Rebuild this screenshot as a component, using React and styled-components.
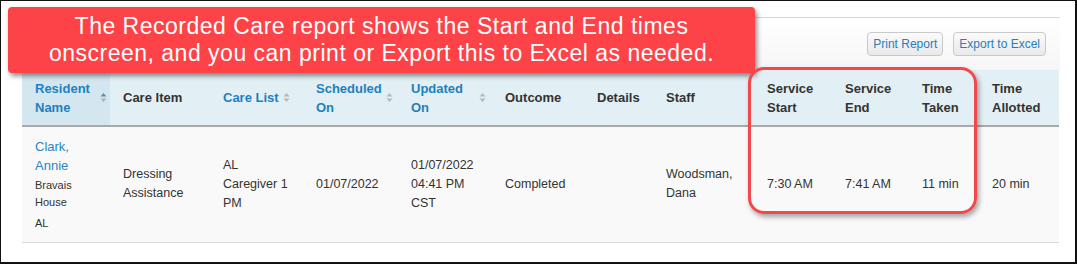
import React from 'react';
import styled, { createGlobalStyle } from 'styled-components';

const GlobalStyle = createGlobalStyle`
  html, body {
    margin: 0;
    padding: 0;
    background: #ffffff;
    font-family: 'Liberation Sans', Arial, sans-serif;
  }
`;

const Frame = styled.div`
  position: relative;
  box-sizing: border-box;
  width: 1077px;
  height: 264px;
  border: 2px solid #111;
  border-left-width: 1px;
  border-top-width: 1px;
  padding: 16px 15px 0 21px;
  background: #fff;
  overflow: hidden;
`;

const Toolbar = styled.div`
  height: 53px;
  border-top: 1px solid #d6d6d6;
  background: linear-gradient(#ffffff, #f6f6f6);
  display: flex;
  justify-content: flex-end;
  align-items: flex-start;
  gap: 10px;
  padding: 14px 14px 0 0;
  box-sizing: border-box;
`;

const ToolButton = styled.button`
  height: 24px;
  padding: 0 5px;
  border: 1px solid #c9c9c9;
  border-radius: 4px;
  background: linear-gradient(#fbfbfb, #e9e9e9);
  color: #2a7db8;
  font-family: 'Liberation Sans', Arial, sans-serif;
  font-size: 12px;
`;

const Table = styled.table`
  width: 1037px;
  border-collapse: collapse;
  table-layout: fixed;
`;

const Th = styled.th`
  width: ${p => p.w}px;
  height: 56px;
  box-sizing: border-box;
  padding: 0 6px 0 13px;
  text-align: left;
  vertical-align: middle;
  background: ${p => (p.sorted ? '#d4e7f0' : '#e2eff4')};
  border-bottom: 2px solid #a9a9a9;
  font-size: 13px;
  line-height: 19px;
  font-weight: bold;
  color: ${p => (p.link ? '#1f80bd' : '#333')};
`;

const HeadInner = styled.div`
  display: flex;
  align-items: center;
  gap: 4px;
`;

const SortIcon = styled.svg`
  flex: none;
  width: 7px;
  height: 11px;
  margin-left: auto;
  margin-right: ${p => p.mr || 0}px;
`;

const InlineSort = styled(SortIcon)`
  margin-left: 0;
`;

const Td = styled.td`
  padding: 7px 6px 7px 13px;
  height: 116px;
  box-sizing: border-box;
  vertical-align: middle;
  background: #f9f9f9;
  border-bottom: 1px solid #d9d9d9;
  font-size: 12.5px;
  line-height: 19px;
  color: #333;
`;

const NameLink = styled.div`
  color: #2a86c3;
  font-size: 13px;
  line-height: 19px;
`;

const SubLine = styled.div`
  font-size: 11px;
  line-height: 17px;
  margin-top: ${p => p.mt || 0}px;
`;

const Callout = styled.div`
  position: absolute;
  left: 7px;
  top: 6px;
  width: 747px;
  height: 66px;
  box-sizing: border-box;
  background: #fd4347;
  border-radius: 4px;
  box-shadow: 2px 3px 5px rgba(0, 0, 0, 0.45);
  color: #fff;
  font-size: 23px;
  letter-spacing: 0.5px;
  line-height: 27px;
  text-align: center;
  padding-top: 6px;
`;

const Highlight = styled.div`
  position: absolute;
  left: 747px;
  top: 66px;
  width: 229px;
  height: 147px;
  box-sizing: border-box;
  border: 3px solid #f2474d;
  border-radius: 16px;
  box-shadow: 2px 3px 5px rgba(0, 0, 0, 0.35);
  pointer-events: none;
`;

const Sort = ({ active, inline, mr }) => {
  const Comp = inline ? InlineSort : SortIcon;
  return (
    <Comp viewBox="0 0 7 11" mr={mr}>
      <path d="M3.5 1 L6.5 4.5 L0.5 4.5 Z" fill={active ? '#5f8fae' : '#b4b9bc'} />
      <path d="M3.5 10 L6.5 6.5 L0.5 6.5 Z" fill={active ? '#aab4ba' : '#b4b9bc'} />
    </Comp>
  );
};

const columns = [
  { key: 'res', label: ['Resident', 'Name'], w: 88, link: true, sort: 'right', active: true, sorted: true },
  { key: 'item', label: ['Care Item'], w: 100 },
  { key: 'list', label: ['Care List'], w: 93, link: true, sort: 'inline' },
  { key: 'sched', label: ['Scheduled', 'On'], w: 95, link: true, sort: 'right' },
  { key: 'upd', label: ['Updated', 'On'], w: 94, link: true, sort: 'right' },
  { key: 'out', label: ['Outcome'], w: 92 },
  { key: 'det', label: ['Details'], w: 69 },
  { key: 'staff', label: ['Staff'], w: 101 },
  { key: 'ss', label: ['Service', 'Start'], w: 78 },
  { key: 'se', label: ['Service', 'End'], w: 77 },
  { key: 'tt', label: ['Time', 'Taken'], w: 70 },
  { key: 'ta', label: ['Time', 'Allotted'], w: 80 },
];

const Lines = ({ lines }) =>
  lines.map((l, i) => (
    <React.Fragment key={i}>
      {i > 0 && <br />}
      {l}
    </React.Fragment>
  ));

export default function App() {
  return (
    <>
      <GlobalStyle />
      <Frame>
        <Toolbar>
          <ToolButton>Print Report</ToolButton>
          <ToolButton>Export to Excel</ToolButton>
        </Toolbar>
        <Table>
          <thead>
            <tr>
              {columns.map(c => (
                <Th key={c.key} w={c.w} link={c.link} sorted={c.sorted}>
                  <HeadInner>
                    <span><Lines lines={c.label} /></span>
                    {c.sort === 'right' && <Sort active={c.active} mr={c.key === 'res' ? -3 : 0} />}
                    {c.sort === 'inline' && <Sort inline />}
                  </HeadInner>
                </Th>
              ))}
            </tr>
          </thead>
          <tbody>
            <tr>
              <Td>
                <NameLink>Clark,<br />Annie</NameLink>
                <SubLine mt={2}>Bravais<br />House</SubLine>
                <SubLine mt={4}>AL</SubLine>
              </Td>
              <Td>Dressing<br />Assistance</Td>
              <Td>AL<br />Caregiver 1<br />PM</Td>
              <Td>01/07/2022</Td>
              <Td>01/07/2022<br />04:41 PM<br />CST</Td>
              <Td>Completed</Td>
              <Td></Td>
              <Td>Woodsman,<br />Dana</Td>
              <Td>7:30 AM</Td>
              <Td>7:41 AM</Td>
              <Td>11 min</Td>
              <Td>20 min</Td>
            </tr>
          </tbody>
        </Table>
        <Callout>
          The Recorded Care report shows the Start and End times
          <br />
          onscreen, and you can print or Export this to Excel as needed.
        </Callout>
        <Highlight />
      </Frame>
    </>
  );
}
